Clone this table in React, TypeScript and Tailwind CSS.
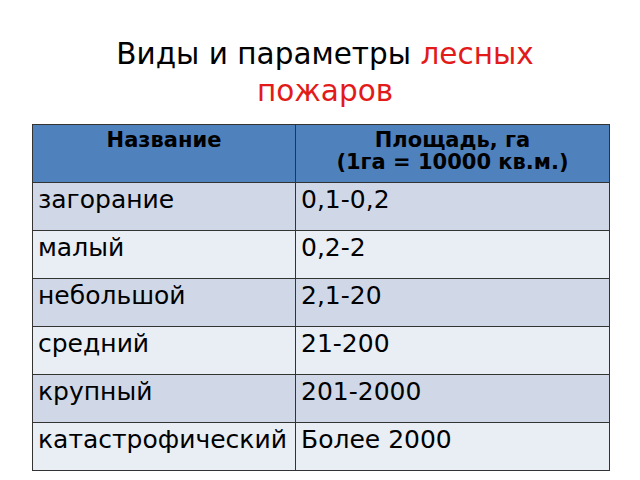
const rows = [
  ["загорание", "0,1-0,2"],
  ["малый", "0,2-2"],
  ["небольшой", "2,1-20"],
  ["средний", "21-200"],
  ["крупный", "201-2000"],
  ["катастрофический", "Более 2000"],
];

export default function App() {
  return (
    <div
      className="w-[640px] h-[480px] bg-white overflow-hidden"
      style={{ fontFamily: '"DejaVu Sans", sans-serif' }}
    >
      <h1 className="mx-auto pt-[36px] pl-[10px] w-[460px] text-center text-[29.5px] leading-[37px] text-black">
        Виды и параметры <span className="text-[#e21a1a]">лесных</span>{" "}
        <span className="text-[#e21a1a]">пожаров</span>
      </h1>
      <table className="mt-[14px] ml-[32px] w-[577px] border-collapse table-fixed text-black">
        <colgroup>
          <col className="w-[263px]" />
          <col className="w-[314px]" />
        </colgroup>
        <thead>
          <tr className="h-[58px] bg-[#4f81bd]">
            <th className="border border-[#333] align-top pt-[4px] text-[21px] leading-[22px] font-bold">
              Название
            </th>
            <th className="border border-[#333] align-top pt-[4px] text-[21px] leading-[22px] font-bold">
              Площадь, га
              <br />
              (1га = 10000 кв.м.)
            </th>
          </tr>
        </thead>
        <tbody>
          {rows.map(([name, area], i) => (
            <tr
              key={name}
              className={i % 2 === 0 ? "h-[48px] bg-[#d0d8e8]" : "h-[48px] bg-[#e9edf4]"}
            >
              <td className="border border-[#333] align-top pl-[5px] pt-[2px] text-[25px] leading-[30px]">
                {name}
              </td>
              <td className="border border-[#333] align-top pl-[5px] pt-[2px] text-[25px] leading-[30px]">
                {area}
              </td>
            </tr>
          ))}
        </tbody>
      </table>
    </div>
  );
}
